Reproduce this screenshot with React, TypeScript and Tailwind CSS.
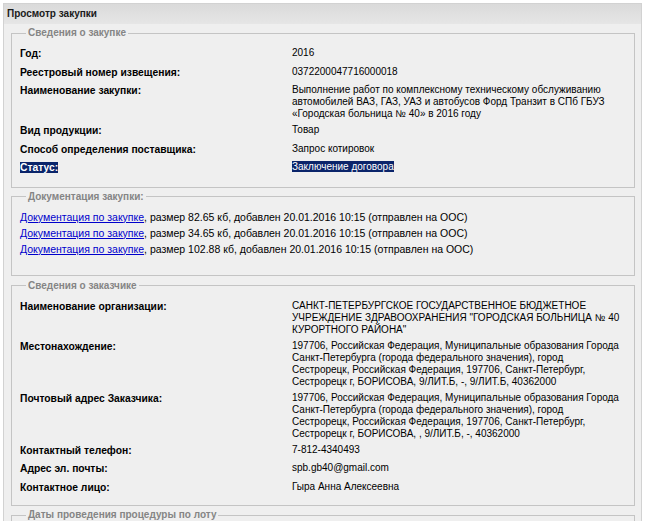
import React from 'react';

type Row = { label: string; value: React.ReactNode; selected?: boolean };

const purchaseRows: Row[] = [
  { label: 'Год:', value: '2016' },
  { label: 'Реестровый номер извещения:', value: '0372200047716000018' },
  {
    label: 'Наименование закупки:',
    value: (
      <>
        Выполнение работ по комплексному техническому обслуживанию
        <br />
        автомобилей ВАЗ, ГАЗ, УАЗ и автобусов Форд Транзит в СПб ГБУЗ
        <br />
        «Городская больница № 40» в 2016 году
      </>
    ),
  },
  { label: 'Вид продукции:', value: 'Товар' },
  { label: 'Способ определения поставщика:', value: 'Запрос котировок' },
  { label: 'Статус:', value: 'Заключение договора', selected: true },
];

const customerRows: Row[] = [
  {
    label: 'Наименование организации:',
    value: (
      <>
        САНКТ-ПЕТЕРБУРГСКОЕ ГОСУДАРСТВЕННОЕ БЮДЖЕТНОЕ
        <br />
        УЧРЕЖДЕНИЕ ЗДРАВООХРАНЕНИЯ "ГОРОДСКАЯ БОЛЬНИЦА № 40
        <br />
        КУРОРТНОГО РАЙОНА"
      </>
    ),
  },
  {
    label: 'Местонахождение:',
    value: (
      <>
        197706, Российская Федерация, Муниципальные образования Города
        <br />
        Санкт-Петербурга (города федерального значения), город
        <br />
        Сестрорецк, Российская Федерация, 197706, Санкт-Петербург,
        <br />
        Сестрорецк г, БОРИСОВА, 9/ЛИТ.Б, -, 9/ЛИТ.Б, 40362000
      </>
    ),
  },
  {
    label: 'Почтовый адрес Заказчика:',
    value: (
      <>
        197706, Российская Федерация, Муниципальные образования Города
        <br />
        Санкт-Петербурга (города федерального значения), город
        <br />
        Сестрорецк, Российская Федерация, 197706, Санкт-Петербург,
        <br />
        Сестрорецк г, БОРИСОВА, , 9/ЛИТ.Б, -, 40362000
      </>
    ),
  },
  { label: 'Контактный телефон:', value: '7-812-4340493' },
  { label: 'Адрес эл. почты:', value: 'spb.gb40@gmail.com' },
  { label: 'Контактное лицо:', value: 'Гыра Анна Алексеевна' },
];

const docs = ['82.65', '34.65', '102.88'];

const Legend = ({ children }: { children: React.ReactNode }) => (
  <legend className="ml-[6px] px-[2px] leading-[14px] font-bold text-[#858585]">{children}</legend>
);

const InfoRows = ({ rows }: { rows: Row[] }) => (
  <div className="flex flex-col gap-[4px]">
    {rows.map((row) => (
      <div key={row.label} className="flex">
        <div className="w-[272px] shrink-0 text-[10.3px] font-bold leading-[14.5px]">
          <span className={row.selected ? 'bg-[#0a246a] text-white' : ''}>{row.label}</span>
        </div>
        <div className="whitespace-nowrap leading-[12px]">
          <span className={row.selected ? 'bg-[#0a246a] text-white' : ''}>{row.value}</span>
        </div>
      </div>
    ))}
  </div>
);

export default function App() {
  return (
    <div
      className="h-[521px] overflow-hidden bg-white pt-[3px] pl-[3px] text-[10px] text-black"
      style={{ fontFamily: '"Liberation Sans", Arial, sans-serif' }}
    >
      <div className="w-[639px] border border-[#d2d2d2] bg-[#efefef]">
        {/* Заголовок */}
        <div className="h-[20px] bg-gradient-to-b from-[#dadada] to-[#e6e6e6] pl-[3px] leading-[20px] font-bold text-[#1a1a1a]">
          Просмотр закупки
        </div>

        <div className="pt-[2px] pl-[7px] pr-[6px] pb-[20px]">
          {/* Сведения о закупке */}
          <fieldset className="min-w-0 border border-[#c4c4c4] pl-[8px] pt-[7px] pb-[11px]">
            <Legend>Сведения о закупке</Legend>
            <InfoRows rows={purchaseRows} />
          </fieldset>

          {/* Документация */}
          <fieldset className="mt-[2px] min-w-0 border border-[#c4c4c4] pl-[8px] pt-[5px] pb-[18px]">
            <Legend>Документация закупки:</Legend>
            {docs.map((size) => (
              <div key={size} className="text-[10.5px] leading-[16px] whitespace-nowrap">
                <a href="#" className="text-[#0000cc] underline">Документация по закупке</a>, размер {size} кб, добавлен 20.01.2016 10:15 (отправлен на ООС)
              </div>
            ))}
          </fieldset>

          {/* Сведения о заказчике */}
          <fieldset className="mt-[3px] min-w-0 border border-[#c4c4c4] pl-[8px] pt-[7px] pb-[10px]">
            <Legend>Сведения о заказчике</Legend>
            <InfoRows rows={customerRows} />
          </fieldset>

          {/* Даты */}
          <fieldset className="mt-[2px] min-w-0 border border-[#c4c4c4] pl-[8px] pt-[7px] pb-[10px]">
            <Legend>Даты проведения процедуры по лоту</Legend>
          </fieldset>
        </div>
      </div>
    </div>
  );
}
